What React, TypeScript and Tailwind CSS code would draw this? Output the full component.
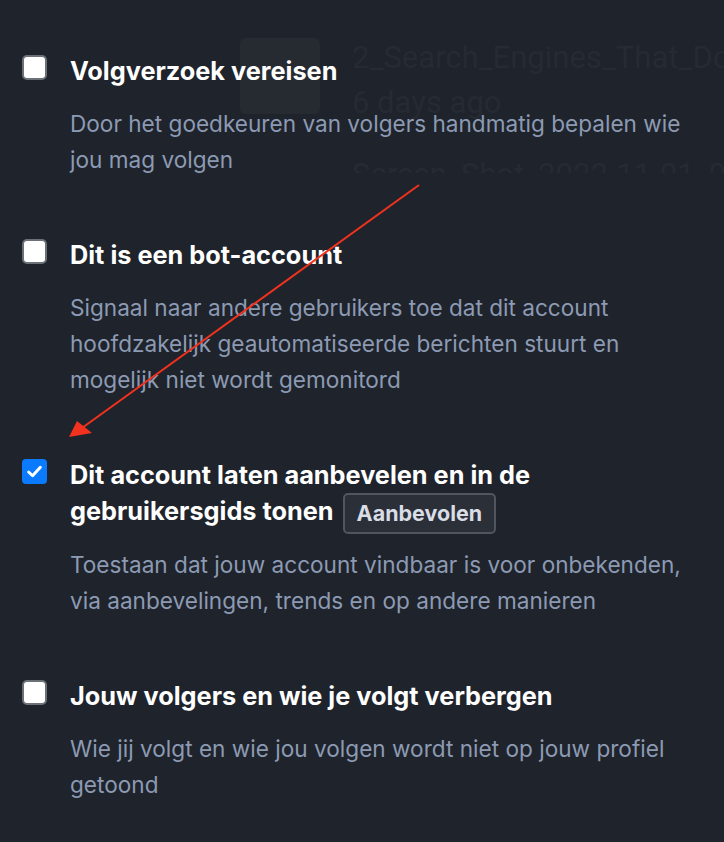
import React from "react";

const ITEMS = [
    {
        title: "Volgverzoek vereisen",
        desc: "Door het goedkeuren van volgers handmatig bepalen wie jou mag volgen",
        checked: false,
    },
    {
        title: "Dit is een bot-account",
        desc: "Signaal naar andere gebruikers toe dat dit account hoofdzakelijk geautomatiseerde berichten stuurt en mogelijk niet wordt gemonitord",
        checked: false,
    },
    {
        title: "Dit account laten aanbevelen en in de gebruikersgids tonen",
        badge: "Aanbevolen",
        desc: "Toestaan dat jouw account vindbaar is voor onbekenden, via aanbevelingen, trends en op andere manieren",
        checked: true,
    },
    {
        title: "Jouw volgers en wie je volgt verbergen",
        desc: "Wie jij volgt en wie jou volgen wordt niet op jouw profiel getoond",
        checked: false,
    },
];

function Checkbox({ checked }: { checked: boolean }) {
    if (checked) {
        return (
            <div className="w-[25px] h-[25px] rounded-[4px] bg-[#0a7aff] flex items-center justify-center shrink-0">
                <svg width="17" height="17" viewBox="0 0 16 16">
                    <path d="M2.5 8.5 L6.2 12 L13.5 4" fill="none" stroke="#fff" strokeWidth="2.8" strokeLinecap="round" strokeLinejoin="round" />
                </svg>
            </div>
        );
    }
    return <div className="w-[25px] h-[25px] rounded-[5px] bg-white border-2 border-[#6c7077] shrink-0" />;
}

export default function App() {
    return (
        <div
            className="relative w-[724px] h-[842px] overflow-hidden bg-[#1f232b]"
            style={{ fontFamily: "Inter, Roboto, 'Liberation Sans', sans-serif" }}
        >
            {/* faint ghost of a drag preview */}
            <div className="absolute left-[240px] top-[38px] flex gap-[32px] pointer-events-none" style={{ fontFamily: "Roboto, sans-serif" }}>
                <div className="w-[80px] h-[76px] rounded-[6px] bg-[#262a31]" />
                <div className="text-[#262a32] text-[31px] leading-[36px] whitespace-nowrap">
                    <div className="mt-[2px]">2_Search_Engines_That_Dont_Track_You</div>
                    <div className="mt-[9px]">6 days ago</div>
                    <div className="mt-[36px] h-[16px] overflow-hidden">Screen_Shot_2022-11-01_09</div>
                </div>
            </div>

            <div className="relative flex flex-col gap-[59px] pt-[53px] pl-[22px] pr-[30px]">
                {ITEMS.map((item) => (
                    <div key={item.title} className="flex gap-[23px]">
                        <div className="pt-[2px]">
                            <Checkbox checked={item.checked} />
                        </div>
                        <div className="flex flex-col gap-[17px]">
                            <div className="text-white font-bold text-[25.3px] leading-[36px]">
                                {item.title}
                                {item.badge && (
                                    <span className="inline-block align-middle ml-[9px] -my-[4px] px-[12px] h-[41px] leading-[37px] rounded-[5px] border-2 border-[#50555f] bg-[#2b2f37] text-[#d8dde6] text-[21.5px] font-bold">
                                        {item.badge}
                                    </span>
                                )}
                            </div>
                            <div className="text-[#8c9ab3] text-[22.6px] leading-[36px]">{item.desc}</div>
                        </div>
                    </div>
                ))}
            </div>

            {/* annotation arrow */}
            <svg className="absolute left-0 top-0 pointer-events-none" width="724" height="842">
                <line x1="419" y1="185" x2="82" y2="428" stroke="#f0321e" strokeWidth="2" />
                <polygon points="69,437 77,421 92,433" fill="#f0321e" />
            </svg>
        </div>
    );
}
